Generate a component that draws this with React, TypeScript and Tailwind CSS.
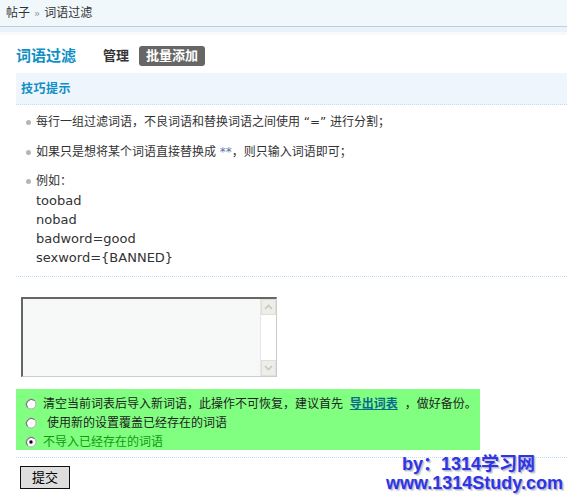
import React from "react";

const font = '"DejaVu Sans", "Noto Sans CJK SC", sans-serif';

function Radio({ checked }: { checked?: boolean }) {
  return (
    <svg width="12" height="12" viewBox="0 0 12 12" className="shrink-0">
      <circle cx="6" cy="6" r="5" fill="#fff" stroke="#b0b0b0" strokeWidth="1" />
      <path d="M2.5 9.5 A5 5 0 0 1 9.5 2.5" fill="none" stroke="#6a6a6a" strokeWidth="1" />
      {checked && <circle cx="6" cy="6" r="1.7" fill="#000" />}
    </svg>
  );
}

function Bullet() {
  return (
    <span className="w-[16px] shrink-0 flex justify-center pt-[7px]">
      <span className="w-[5px] h-[5px] rounded-full bg-[#b5b5b5]" />
    </span>
  );
}

export default function App() {
  return (
    <div className="relative w-[567px] h-[496px] bg-white overflow-hidden text-[12px] text-[#333]" style={{ fontFamily: font }}>
      {/* breadcrumb */}
      <div className="h-[27px] bg-[#f1f8fc] border-b border-[#c2cdd4] flex items-center pl-[6px] gap-[4px]">
        <span>帖子</span>
        <span className="text-[#8a9aa5] text-[10px]">»</span>
        <span>词语过滤</span>
      </div>
      <div className="h-[5px] bg-[#e8f3fb]" />
      <div className="h-[3px] bg-[#f7f9fa]" />

      <div className="pl-[16px]">
        {/* title row */}
        <div className="flex items-center h-[38px] pt-[4px]">
          <span className="text-[15px] font-bold text-[#0e8fc5] w-[87px]">词语过滤</span>
          <span className="text-[13px] font-bold text-[#333] mr-[10px]">管理</span>
          <span className="text-[13px] font-bold text-white bg-[#666] rounded-[3px] h-[20px] px-[7px] flex items-center">批量添加</span>
        </div>

        {/* tips */}
        <div className="bg-[#eef5fc] h-[32px] flex items-center pl-[5px] border-b border-dotted border-[#c8dcea]">
          <span className="font-bold text-[#0e8fc5] tracking-[0.5px]">技巧提示</span>
        </div>
        <ul className="pl-[4px] pt-[8px] pb-[9px] border-b border-dotted border-[#bfe0f2]">
          <li className="flex items-start leading-[19px] mb-[11px]">
            <Bullet />
            <span>每行一组过滤词语，不良词语和替换词语之间使用 “=” 进行分割；</span>
          </li>
          <li className="flex items-start leading-[19px] mb-[10px]">
            <Bullet />
            <span>如果只是想将某个词语直接替换成 <span className="text-[#5577aa]">**</span>，则只输入词语即可；</span>
          </li>
          <li className="flex items-start leading-[19px]">
            <Bullet />
            <div className="flex flex-col text-[13px]">
              <span className="text-[12px] leading-[19px]">例如：</span>
              <span className="leading-[19px]">toobad</span>
              <span className="leading-[19px]">nobad</span>
              <span className="leading-[19px]">badword=good</span>
              <span className="leading-[19px]">sexword={"{BANNED}"}</span>
            </div>
          </li>
        </ul>

        {/* textarea */}
        <div className="pt-[20px] pl-[5px] pb-[12px]">
          <div className="w-[256px] h-[80px] flex border-l-2 border-t-2 border-[#666] border-r border-b border-r-[#ccc] border-b-[#ccc] bg-[#f7f9f9]">
            <div className="flex-1" />
            <div className="w-[16px] bg-white border-l border-[#e6e6e6] flex flex-col justify-between">
              <div className="h-[16px] bg-[#eeeee8] border border-[#e0e0da] flex items-center justify-center">
                <svg width="9" height="6" viewBox="0 0 9 6"><path d="M1 5 L4.5 1.5 L8 5" fill="none" stroke="#c8c8c0" strokeWidth="1.6" /></svg>
              </div>
              <div className="h-[16px] bg-[#eeeee8] border border-[#e0e0da] flex items-center justify-center">
                <svg width="9" height="6" viewBox="0 0 9 6"><path d="M1 1 L4.5 4.5 L8 1" fill="none" stroke="#c8c8c0" strokeWidth="1.6" /></svg>
              </div>
            </div>
          </div>
        </div>

        {/* options */}
        <div className="w-[464px] h-[61px] bg-[#80ff80] pl-[9px] pt-[5px] text-[12px] text-[#222] whitespace-nowrap">
          <div className="flex items-center h-[19px] gap-[6px]">
            <Radio />
            <span>清空当前词表后导入新词语，此操作不可恢复，建议首先 <a className="font-bold underline text-[#0a6c8c] mx-[3px]">导出词表</a> ，做好备份。</span>
          </div>
          <div className="flex items-center h-[19px] gap-[10px]">
            <Radio />
            <span>使用新的设置覆盖已经存在的词语</span>
          </div>
          <div className="flex items-center h-[19px] gap-[6px]">
            <Radio checked />
            <span className="text-[#119911]">不导入已经存在的词语</span>
          </div>
        </div>
        <div className="border-b border-dotted border-[#bfe0f2] mt-[7px]" />

        <div className="pt-[8px] pl-[4px]">
          <button className="w-[50px] h-[23px] bg-[#dedede] border border-[#111] text-[13px] text-black flex items-center justify-center">提交</button>
        </div>
      </div>

      {/* watermark */}
      <div
        className="absolute right-[4px] top-[455px] flex flex-col items-end font-bold text-[#2e35e8] text-[18px] leading-[19px]"
        style={{ fontFamily: '"Liberation Sans", "Noto Sans CJK SC", sans-serif', textShadow: "1px 1px 0 #b8b8c8, 2px 2px 1px #d8d8e0" }}
      >
        <span className="mr-[28px]">by：1314学习网</span>
        <span>www.1314Study.com</span>
      </div>
    </div>
  );
}
